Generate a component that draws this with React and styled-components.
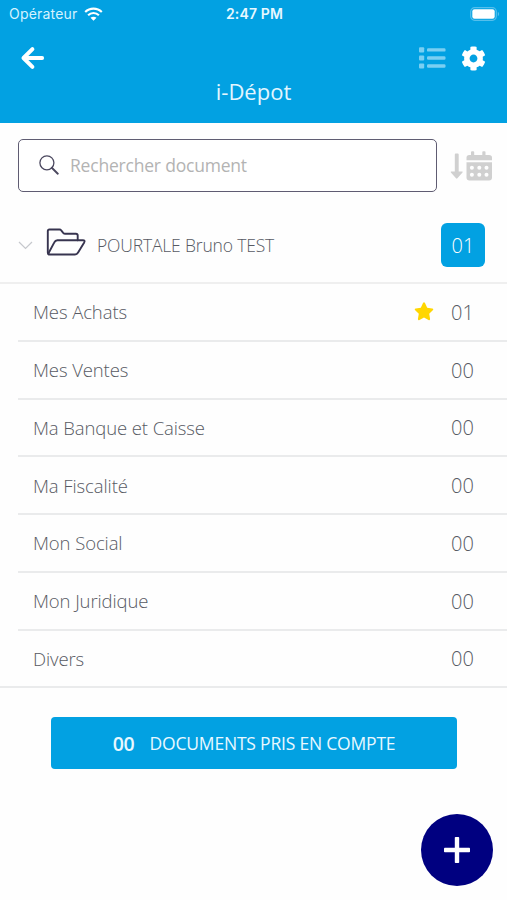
import React from "react";
import styled, { createGlobalStyle } from "styled-components";
import { FaCog } from "react-icons/fa";

const GlobalStyle = createGlobalStyle`
  *, *::before, *::after { box-sizing: border-box; }
  html, body { margin: 0; padding: 0; background: #fefefe; }
  body { font-family: "Open Sans", "Noto Sans", sans-serif; overflow: hidden; }
  button { font: inherit; border: 0; padding: 0; background: none; color: inherit; }
  svg { display: block; flex: none; }
`;

const Screen = styled.div`
  display: flex;
  flex-direction: column;
  width: 507px;
  height: 900px;
  background: #fefefe;
  color: #575a63;
`;

const Header = styled.header`
  height: 123px;
  flex: none;
  background: #02a1e2;
  color: #fff;
`;

const StatusBar = styled.div`
  display: grid;
  grid-template-columns: 1fr auto 1fr;
  align-items: center;
  height: 27px;
  padding: 0 7px 0 9px;
  font-family: Inter, "Liberation Sans", sans-serif;
  font-size: 14px;
`;

const Carrier = styled.div`
  display: flex;
  align-items: center;
  gap: 6px;
  color: #d5f3ff;
  letter-spacing: 0.2px;
`;

const Clock = styled.div`
  font-weight: 600;
  letter-spacing: 0.15px;
  color: #e8f8ff;
`;

const BatterySlot = styled.div`
  display: flex;
  justify-content: flex-end;
`;

const Toolbar = styled.div`
  display: flex;
  align-items: center;
  justify-content: space-between;
  height: 62px;
  padding: 0 21px 0 20px;
`;

const Actions = styled.div`
  display: flex;
  align-items: center;
  gap: 15px;
`;

const IconButton = styled.button`
  display: flex;
  color: #fff;
`;

const Title = styled.h1`
  margin: -13px 0 0;
  text-align: center;
  font-size: 22px;
  line-height: 30px;
  font-weight: 400;
  color: #e2f6ff;
`;

const SearchRow = styled.div`
  display: flex;
  align-items: center;
  gap: 13px;
  margin: 16px 14px 0 18px;
`;

const SearchField = styled.label`
  display: flex;
  align-items: center;
  gap: 11px;
  width: 419px;
  height: 53px;
  padding: 0 0 1px 20px;
  border: 1.5px solid #5f5c72;
  border-radius: 5px;
  background: #fff;
`;

const SearchInput = styled.input`
  width: 320px;
  border: 0;
  padding: 0;
  outline: 0;
  background: none;
  font: 400 17.5px/24px "Open Sans", sans-serif;
  letter-spacing: -0.2px;
  &::placeholder { color: #b3b3b3; opacity: 1; }
`;

const FolderRow = styled.div`
  display: flex;
  align-items: center;
  height: 92px;
  padding: 16px 22px 0 18px;
  border-bottom: 2px solid #efefef;
`;

const FolderIcon = styled.div`
  margin: -6px 11px 0 13px;
`;

const FolderName = styled.div`
  flex: 1;
  margin-top: -1px;
  font-size: 17.5px;
  font-weight: 300;
  letter-spacing: -0.17px;
  white-space: nowrap;
`;

const Badge = styled.div`
  display: flex;
  align-items: center;
  justify-content: center;
  width: 44px;
  height: 44px;
  border-radius: 6px;
  background: #02a1e2;
  color: #fff;
  font-size: 20px;
  font-weight: 300;
`;

const List = styled.ul`
  list-style: none;
  margin: 0;
  padding: 0;
`;

const Row = styled.li`
  display: flex;
  align-items: center;
  height: 57.75px;
  margin-left: ${(p) => (p.$last ? "0" : "18px")};
  padding: 0 28px 0 ${(p) => (p.$last ? "33px" : "15px")};
  border-bottom: 2px solid #eaebec;
`;

const RowLabel = styled.span`
  flex: 1;
  font-size: 18.5px;
  font-weight: 300;
  letter-spacing: -0.1px;
`;

const RowCount = styled.span`
  width: 28px;
  margin-left: 17px;
  padding-top: 1px;
  font-size: 20px;
  font-weight: 300;
`;

const SubmitButton = styled.button`
  display: flex;
  align-items: center;
  justify-content: center;
  gap: 15px;
  width: 406px;
  height: 52px;
  margin: 29px 0 0 51px;
  flex: none;
  border-radius: 4px;
  background: #02a1e2;
  color: #e8f8ff;
  font-size: 17.5px;
  letter-spacing: -0.2px;
`;

const SubmitCount = styled.span`
  font-size: 19.5px;
  font-weight: 600;
`;

const AddButton = styled.button`
  display: flex;
  align-items: center;
  justify-content: center;
  width: 72px;
  height: 72px;
  margin: 45px 14px 0 auto;
  flex: none;
  border-radius: 50%;
  background: #000080;
`;

const WifiIcon = () => (
  <svg width="19" height="14" viewBox="0 0 19 14" fill="none" stroke="#fff" strokeWidth="2.1">
    <path d="M1.2 5.1C5.8.5 13.2.5 17.8 5.1" />
    <path d="M4.1 8.2C7.1 5.2 11.9 5.2 14.9 8.2" />
    <path d="M9.5 13.8 6.5 10.7C8.1 9.3 10.9 9.3 12.5 10.7Z" fill="#fff" stroke="none" />
  </svg>
);

const BatteryIcon = () => (
  <svg width="30" height="14" viewBox="0 0 30 14">
    <rect x=".7" y=".7" width="25.6" height="12.6" rx="4" fill="none" stroke="#55bfec" strokeWidth="1.2" />
    <rect x="2.3" y="2.3" width="22.4" height="9.4" rx="2.2" fill="#fff" />
    <path d="M27.8 4.8c1.8.7 1.8 3.7 0 4.4Z" fill="#55bfec" />
  </svg>
);

const BackIcon = () => (
  <svg width="25" height="24" viewBox="0 0 25 24" fill="none" stroke="#fff" strokeWidth="4" strokeLinecap="round" strokeLinejoin="round">
    <path d="M12.4 3.2 3.5 12l8.9 8.8" />
    <path d="M4 12h18" strokeLinecap="butt" />
    <path d="M21.8 12h.4" strokeWidth="3.8" />
  </svg>
);

const ListIcon = () => (
  <svg width="27" height="24" viewBox="0 0 27 24" fill="#7acff2">
    <rect x="0" y="1.2" width="5.2" height="5.2" rx="1" />
    <rect x="0" y="9.4" width="5.2" height="5.2" rx="1" />
    <rect x="0" y="17.4" width="5.2" height="5.2" rx="1" />
    <rect x="8" y="2.2" width="18.5" height="3.4" rx="1.2" />
    <rect x="8" y="10.3" width="18.5" height="3.4" rx="1.2" />
    <rect x="8" y="18.3" width="18.5" height="3.4" rx="1.2" />
  </svg>
);

const SearchIcon = () => (
  <svg width="20" height="20" viewBox="0 0 20 20" fill="none" stroke="#4b485f" strokeLinecap="round">
    <circle cx="7.9" cy="7.8" r="7" strokeWidth="1.3" />
    <path d="m12.8 12.8 6 5.9" strokeWidth="1.9" />
  </svg>
);

const SortDateIcon = () => (
  <svg width="43" height="32" viewBox="0 -1 43 32" fill="#d0d0d0">
    <path d="M4.8 3.5q0-1 1-1h1.9q1 0 1 1v17h3.4q1.1.1.4 1l-5.1 5.8q-.7.7-1.4 0L.9 21.5q-.7-.9.4-1h3.5Z" />
    <path d="M21 1q0-.8 1-.8h1.2q1 0 1 .8v3h8.1V1q0-.8 1-.8h1.2q1 0 1 .8v3H39q3 0 3 2.7v2.6H16.5V6.7Q16.5 4 19.3 4H21Z" />
    <path d="M16.5 11.2H42v15.4q0 2.9-3 2.9H19.5q-3 0-3-2.9Z" />
    <g fill="#fefefe">
      <circle cx="21.9" cy="16.7" r="2" />
      <circle cx="29.3" cy="16.7" r="2" />
      <circle cx="36.5" cy="16.7" r="2" />
      <circle cx="21.9" cy="23.8" r="2" />
      <circle cx="29.3" cy="23.8" r="2" />
      <circle cx="36.5" cy="23.8" r="2" />
    </g>
  </svg>
);

const ChevronIcon = () => (
  <svg width="15" height="9" viewBox="0 0 15 9" fill="none" stroke="#c6c8cd" strokeWidth="1.2">
    <path d="m1 1 6.5 6.5L14 1" />
  </svg>
);

const FolderOpenIcon = () => (
  <svg width="40" height="28" viewBox="0 0 40 28" fill="none" stroke="#37344f" strokeWidth="1.9" strokeLinecap="round" strokeLinejoin="round">
    <path d="M2.6 26.3Q1.8 25.5 1.8 24.5V3Q1.8 1.5 3.4 1.5h10q1.2 0 1.8.8l2 2.5q.8.9 2 .9h10.7q1.8 0 1.8 1.8v4.7" />
    <path d="M2.5 25.2 8.3 14.4q1-2.2 3.1-2.2h25.5q2.5 0 1.3 2.2l-6.1 10.1q-1.1 2-3.2 2H3.5q-1.6 0-1-1.3Z" />
  </svg>
);

const StarIcon = () => (
  <svg width="20" height="19" viewBox="0 0 20 19" fill="#ffd600">
    <path d="M9 1.1q1-1.6 2 0l2.2 4.6 5 .7q1.8.4.6 1.8L15.2 11.8l.9 5.1q.1 1.9-1.6 1.1L10 15.6 5.5 18q-1.7.8-1.6-1.1l.9-5.1L1.2 8.2Q0 6.8 1.8 6.4l5-.7Z" />
  </svg>
);

const PlusIcon = () => (
  <svg width="28" height="28" viewBox="0 0 28 28" fill="#fff">
    <rect x="1" y="11.8" width="26" height="4.4" rx=".8" />
    <rect x="11.8" y="1" width="4.4" height="26" rx=".8" />
  </svg>
);

const categories = [
  { label: "Mes Achats", count: "01", starred: true },
  { label: "Mes Ventes", count: "00" },
  { label: "Ma Banque et Caisse", count: "00" },
  { label: "Ma Fiscalité", count: "00" },
  { label: "Mon Social", count: "00" },
  { label: "Mon Juridique", count: "00" },
  { label: "Divers", count: "00" },
];

export default function App() {
  return (
    <Screen>
      <GlobalStyle />
      <Header>
        <StatusBar>
          <Carrier>
            <span>Opérateur</span>
            <WifiIcon />
          </Carrier>
          <Clock>2:47 PM</Clock>
          <BatterySlot><BatteryIcon /></BatterySlot>
        </StatusBar>
        <Toolbar>
          <IconButton aria-label="Retour"><BackIcon /></IconButton>
          <Actions>
            <IconButton aria-label="Liste"><ListIcon /></IconButton>
            <IconButton aria-label="Réglages"><FaCog size={25} /></IconButton>
          </Actions>
        </Toolbar>
        <Title>i-Dépot</Title>
      </Header>
      <SearchRow>
        <SearchField>
          <SearchIcon />
          <SearchInput placeholder="Rechercher document" />
        </SearchField>
        <SortDateIcon />
      </SearchRow>
      <FolderRow>
        <ChevronIcon />
        <FolderIcon><FolderOpenIcon /></FolderIcon>
        <FolderName>POURTALE Bruno TEST</FolderName>
        <Badge>01</Badge>
      </FolderRow>
      <List>
        {categories.map((c, i) => (
          <Row key={c.label} $last={i === categories.length - 1}>
            <RowLabel>{c.label}</RowLabel>
            {c.starred && <StarIcon />}
            <RowCount>{c.count}</RowCount>
          </Row>
        ))}
      </List>
      <SubmitButton>
        <SubmitCount>00</SubmitCount>
        <span>DOCUMENTS PRIS EN COMPTE</span>
      </SubmitButton>
      <AddButton aria-label="Ajouter"><PlusIcon /></AddButton>
    </Screen>
  );
}
